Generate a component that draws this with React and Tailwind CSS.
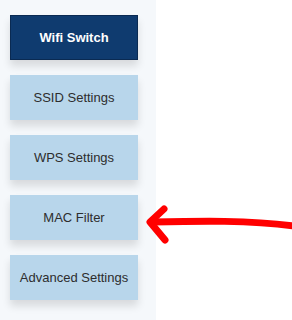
import React from "react";

const items = ["SSID Settings", "WPS Settings", "MAC Filter", "Advanced Settings"];

export default function App() {
  return (
    <div className="relative w-[292px] h-[320px] bg-white overflow-hidden" style={{ fontFamily: '"Liberation Sans", Arial, sans-serif' }}>
      <div className="w-[156px] h-full bg-[#f5f8fb] pt-[15px] pl-[10px] flex flex-col gap-[15px]">
        <div className="w-[128px] h-[45px] bg-[#0f3b6f] border border-[#0a2a52] flex items-center justify-center text-white font-bold text-[13px] shadow-[0_6px_8px_rgba(0,0,0,0.12)]">
          Wifi Switch
        </div>
        {items.map((t) => (
          <div key={t} className="w-[128px] h-[45px] bg-[#b8d6eb] flex items-center justify-center text-[#2d2d2d] text-[13px] shadow-[0_6px_8px_rgba(0,0,0,0.12)]">
            {t}
          </div>
        ))}
      </div>
      <svg className="absolute left-0 top-0" width="292" height="320" viewBox="0 0 292 320">
        <path d="M152 222 C 200 221, 250 220, 294 226" stroke="#ff0000" strokeWidth="7" fill="none" strokeLinecap="round" />
        <path d="M164 209 L150 222 L165 240" stroke="#ff0000" strokeWidth="7" fill="none" strokeLinecap="round" strokeLinejoin="round" />
      </svg>
    </div>
  );
}
